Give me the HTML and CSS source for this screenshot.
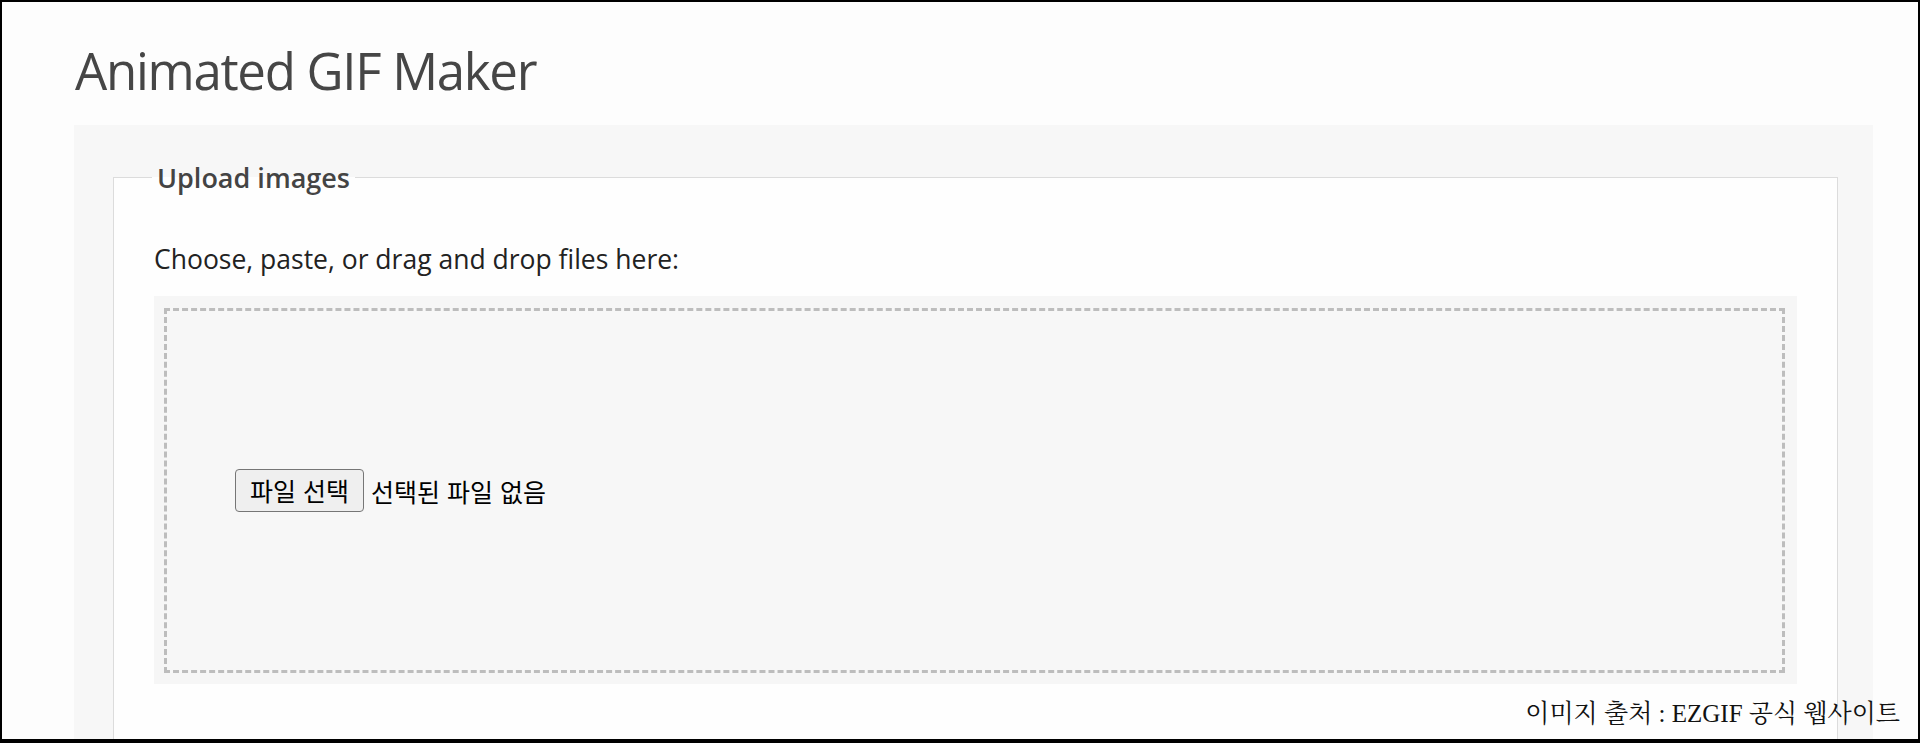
FILE: index.html
```html
<!DOCTYPE html>
<html lang="ko">
<head>
    <meta charset="UTF-8">
    <meta name="viewport" content="width=device-width, initial-scale=1.0">
    <title>Animated GIF Maker</title>
    <link rel="stylesheet" href="styles.css">
</head>
<body>
<div class="frame">
  <h1 class="page-title">Animated GIF Maker</h1>

  <!-- Upload panel -->
  <div class="panel">
    <fieldset class="upload-box">
      <legend>Upload images</legend>
      <p class="upload-hint">Choose, paste, or drag and drop files here:</p>

      <div class="drop-zone">
        <div class="drop-inner">
          <span class="file-btn">파일 선택</span>
          <span class="file-name">선택된 파일 없음</span>
        </div>
      </div>
    </fieldset>
  </div>

  <!-- Source caption -->
  <div class="caption">이미지 출처 : EZGIF 공식 웹사이트</div>
</div>
</body>
</html>
```

FILE: styles.css
```css
* {
  box-sizing: border-box;
}

body {
  margin: 0;
  background: #fff;
  font-family: "Open Sans", "Noto Sans", "Noto Sans CJK KR", sans-serif;
}

.frame {
  position: relative;
  height: 743px;
  overflow: hidden;
  border: 2px solid #000;
  border-bottom-width: 4px;
  background-color: #fdfdfd;
}

/* Title */
.page-title {
  margin: 43px 0 29px 73px;
  font-size: 51px;
  font-weight: 400;
  line-height: 1;
  letter-spacing: -1.3px;
  color: #464646;
}

/* Panel */
.panel {
  margin: 0 45px 0 72px;
  padding: 35px 35px 0 39px;
  background-color: #f7f7f7;
}

.upload-box {
  margin: 0;
  padding: 0 40px 80px 40px;
  border: 1px solid #dcdcdc;
  background-color: #fefefe;
}

.upload-box legend {
  margin-left: -2px;
  padding: 0 5px;
  font-size: 27px;
  line-height: 35px;
  font-weight: 600;
  color: #444;
}

.upload-hint {
  margin: 47px 0 19px;
  font-size: 26.5px;
  line-height: 35px;
  color: #222;
}

/* Drop zone */
.drop-zone {
  padding: 12px 12px 11px 10px;
  background-color: #f6f6f6;
}

.drop-inner {
  display: flex;
  align-items: center;
  height: 365px;
  padding-left: 68px;
  border: 3px dashed #bdbdbd;
  background-color: #f7f7f7;
  font-family: "Noto Sans CJK KR", sans-serif;
  font-size: 25px;
  color: #000;
}

.file-btn {
  padding: 3px 14px;
  line-height: 35px;
  background-color: #efefef;
  border: 1px solid #767676;
  border-radius: 4px;
}

.file-name {
  margin-left: 7px;
}

/* Caption */
.caption {
  position: absolute;
  right: 18px;
  bottom: 10px;
  font-family: "Liberation Serif", "Noto Serif CJK KR", "Noto Sans CJK KR", serif;
  font-size: 25px;
  line-height: 30px;
  color: #111;
}
```
